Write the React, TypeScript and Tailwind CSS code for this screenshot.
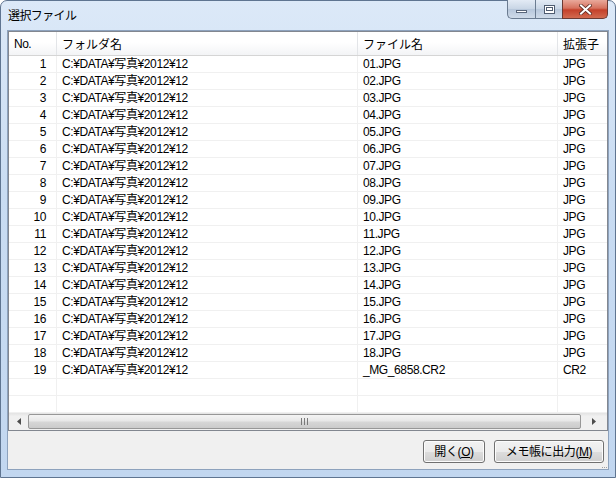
import React from "react";

const rows = Array.from({ length: 19 }, (_, i) => {
  const n = i + 1;
  const nn = n < 10 ? "0" + n : String(n);
  return {
    no: n,
    folder: "C:¥DATA¥写真¥2012¥12",
    file: n === 19 ? "_MG_6858.CR2" : nn + ".JPG",
    ext: n === 19 ? "CR2" : "JPG",
  };
});

const font = { fontFamily: '"Liberation Sans", "Noto Sans CJK JP", sans-serif' };

function Row({ no, folder, file, ext }: { no?: number; folder?: string; file?: string; ext?: string }) {
  return (
    <div className="flex h-[17px] border-b border-[#f0f0f0] text-[12px] leading-[16px] tracking-[-0.4px] text-black">
      <div className="w-[48px] shrink-0 border-r border-[#f0f0f0] pr-[10px] text-right">{no ?? ""}</div>
      <div className="w-[301px] shrink-0 border-r border-[#f0f0f0] pl-[5px]">{folder ?? ""}</div>
      <div className="w-[200px] shrink-0 border-r border-[#f0f0f0] pl-[5px]">{file ?? ""}</div>
      <div className="flex-1 pl-[5px]">{ext ?? ""}</div>
    </div>
  );
}

function Btn({ label, k, w }: { label: string; k: string; w: string }) {
  return (
    <div
      className={`${w} h-[23px] rounded-[3px] border border-[#707070] bg-[linear-gradient(#f2f2f2_0%,#ebebeb_50%,#dddddd_51%,#cfcfcf_100%)] shadow-[inset_0_0_0_1px_#fcfcfc] flex items-center justify-center text-[12px] tracking-[-0.4px] text-black`}
    >
      <span>
        {label}(<span className="underline">{k}</span>)
      </span>
    </div>
  );
}

export default function App() {
  return (
    <div className="w-[616px] h-[478px] bg-white" style={font}>
      <div className="w-[616px] h-[478px] rounded-t-[7px] border border-[#5f7591] bg-[linear-gradient(#dce9f8_0%,#c9dcf2_40%,#c2d7f0_100%)] flex flex-col">
        {/* title bar */}
        <div className="h-[29px] shrink-0 flex items-start relative">
          <div className="pl-[7px] pt-[6px] text-[12px] leading-[16px] tracking-[-0.6px] text-black" style={{ fontFamily: '"Noto Sans CJK JP", sans-serif' }}>
            選択ファイル
          </div>
          <div className="absolute right-[7px] top-[-1px] flex h-[19px]">
            <div className="w-[28px] h-[19px] rounded-bl-[5px] border border-[#6b7c91] border-t-0 border-r-0 bg-[linear-gradient(#e3ebf5_0%,#c8d5e5_50%,#b7c7db_51%,#cfdbe9_100%)] flex items-center justify-center">
              <div className="w-[11px] h-[3px] mt-[4px] border border-[#59667a] bg-white" />
            </div>
            <div className="w-[27px] h-[19px] border-l border-b border-[#6b7c91] bg-[linear-gradient(#e3ebf5_0%,#c8d5e5_50%,#b7c7db_51%,#cfdbe9_100%)] flex items-center justify-center">
              <div className="w-[11px] h-[9px] border border-[#4f5c70] bg-white flex items-center justify-center">
                <div className="w-[7px] h-[4px] border border-[#4f5c70]" />
              </div>
            </div>
            <div className="w-[46px] h-[19px] rounded-br-[5px] border border-t-0 border-[#6b3a33] bg-[linear-gradient(#e9a99b_0%,#d6725f_45%,#c4412b_55%,#d26a4f_100%)] flex items-center justify-center">
              <svg width="13" height="11" viewBox="0 0 13 11">
                <path d="M2 1.5 L11 9.5 M11 1.5 L2 9.5" stroke="#5a2a22" strokeWidth="3.6" strokeLinecap="square" />
                <path d="M2 1.5 L11 9.5 M11 1.5 L2 9.5" stroke="#ffffff" strokeWidth="2" strokeLinecap="square" />
              </svg>
            </div>
          </div>
        </div>
        {/* client */}
        <div className="mx-[6px] mb-[7px] flex-1 border border-[#8da2bd] bg-[#f0f0f0] flex flex-col">
          {/* list view */}
          <div className="h-[400px] shrink-0 border border-[#828790] bg-white flex flex-col overflow-hidden">
            {/* header */}
            <div className="h-[24px] shrink-0 flex text-[12px] text-black border-b border-[#d5d5d5] bg-[linear-gradient(#ffffff_0%,#ffffff_45%,#f3f4f6_100%)]">
              <div className="w-[48px] shrink-0 border-r border-[#e3e5e8] pl-[5px] flex items-center tracking-[-0.5px]">No.</div>
              <div className="w-[301px] shrink-0 border-r border-[#e3e5e8] pl-[5px] flex items-center" style={{ fontFamily: '"Noto Sans CJK JP", sans-serif' }}>フォルダ名</div>
              <div className="w-[200px] shrink-0 border-r border-[#e3e5e8] pl-[5px] flex items-center" style={{ fontFamily: '"Noto Sans CJK JP", sans-serif' }}>ファイル名</div>
              <div className="flex-1 pl-[5px] flex items-center" style={{ fontFamily: '"Noto Sans CJK JP", sans-serif' }}>拡張子</div>
            </div>
            <div className="flex-1 flex flex-col">
              {rows.map((r) => (
                <Row key={r.no} {...r} />
              ))}
              <Row />
              <Row />
            </div>
            {/* horizontal scrollbar */}
            <div className="h-[17px] shrink-0 flex items-stretch bg-[linear-gradient(#e3e3e3_0%,#f0f0f0_20%,#f0f0f0_100%)]">
              <div className="w-[19px] flex items-center justify-center">
                <svg width="4" height="7" viewBox="0 0 4 7"><path d="M4 0 L0 3.5 L4 7 Z" fill="#4d4d4d" /></svg>
              </div>
              <div className="flex-1 my-[1px] rounded-[2px] border border-[#979797] bg-[linear-gradient(#f4f4f4_0%,#e8e8e8_45%,#d6d6d6_55%,#cbcbcb_100%)] flex items-center justify-center">
                <div className="flex gap-[2px]">
                  <div className="w-[1px] h-[7px] bg-[#7a7a7a]" />
                  <div className="w-[1px] h-[7px] bg-[#7a7a7a]" />
                  <div className="w-[1px] h-[7px] bg-[#7a7a7a]" />
                </div>
              </div>
              <div className="w-[26px] flex items-center justify-center">
                <svg width="4" height="7" viewBox="0 0 4 7"><path d="M0 0 L4 3.5 L0 7 Z" fill="#4d4d4d" /></svg>
              </div>
            </div>
          </div>
          {/* buttons */}
          <div className="flex-1 flex items-start justify-end pt-[9px] pr-[4px] gap-[9px] relative">
            <Btn label="開く" k="O" w="w-[62px]" />
            <Btn label="メモ帳に出力" k="M" w="w-[110px]" />
            <div className="absolute right-[1px] bottom-[1px] grid grid-cols-3 gap-[1px]">
              {Array.from({ length: 3 }).map((_, i) => (
                <div key={i} className="w-[1px] h-[1px] bg-[#a0a0a0]" />
              ))}
            </div>
          </div>
        </div>
      </div>
    </div>
  );
}
